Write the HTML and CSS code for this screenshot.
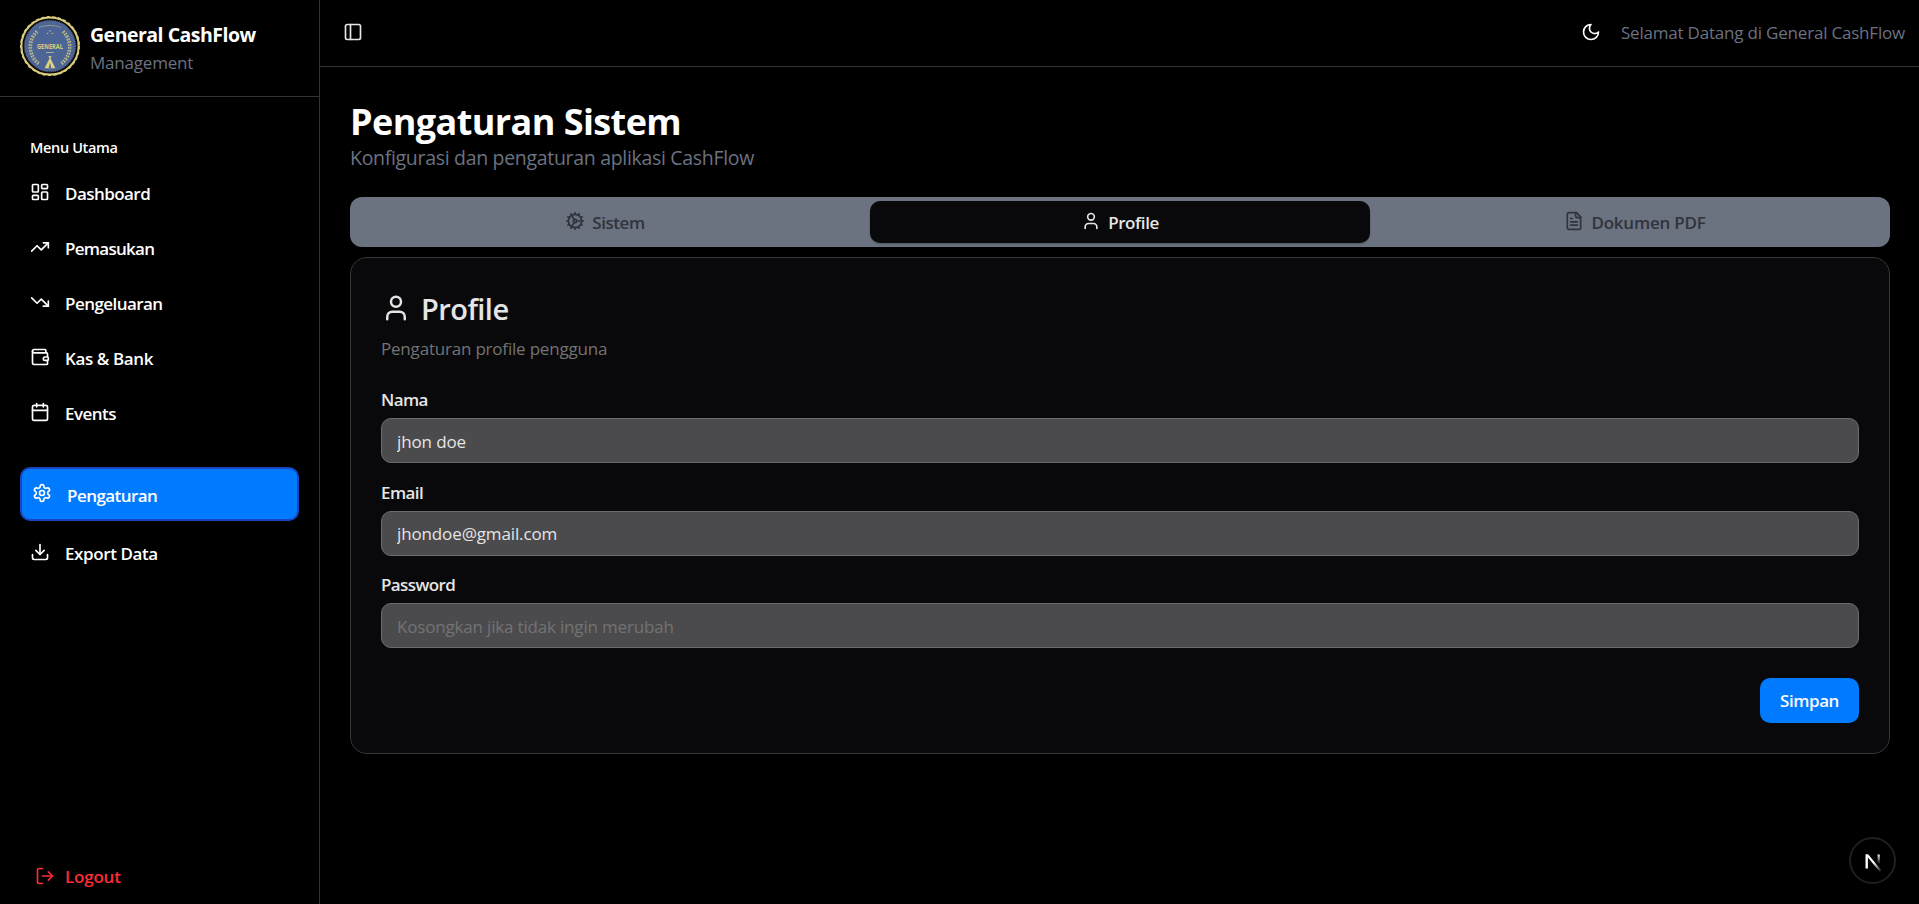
FILE: index.html
```html
<!DOCTYPE html>
<html lang="id">
<head>
<meta charset="utf-8">
<title>General CashFlow</title>
<link rel="stylesheet" href="styles.css">
</head>
<body>
<aside class="sidebar">
  <div class="brand">
    <svg class="brand-logo" viewBox="0 0 60 60">
      <circle cx="30" cy="30" r="28.6" fill="#07070a" stroke="#d8cd7c" stroke-width="2"/>
      <circle cx="30" cy="30" r="29.3" fill="none" stroke="#d8cd7c" stroke-width="1.3" stroke-dasharray="3.4 2.2"/>
      <circle cx="30" cy="30" r="25.6" fill="#4d6496"/>
      <circle cx="30" cy="30" r="25.8" fill="none" stroke="#8b9098" stroke-width=".6" stroke-dasharray="1 1"/>
      <path d="M17 15.5A21 21 0 0 0 18.5 47.5M43 15.5A21 21 0 0 1 41.5 47.5" fill="none" stroke="#c5c184" stroke-width="3.6" stroke-dasharray="1.6 1.3"/>
      <path d="M17 15.5A21 21 0 0 0 18.5 47.5M43 15.5A21 21 0 0 1 41.5 47.5" fill="none" stroke="#7f8c8e" stroke-width="1"/>
      <path d="M19 11.5Q30 7.5 41 11.5" fill="none" stroke="#a9ad8e" stroke-width="1" stroke-dasharray="1.6 .5"/>
      <path d="M29 15.5l1-1.5 1 1.5zM26.500 18l1-1.6 1 1.6zM31.500 18l1-1.6 1 1.6z" fill="#c5c184"/>
      <text class="logo-text" x="30" y="32.8" text-anchor="middle" textLength="26" lengthAdjust="spacingAndGlyphs">GENERAL</text>
      <path d="M26 36.500h8" stroke="#a9ad8e" stroke-width="1"/>
      <path d="M28.700 40l1.300 2.500 1.300-2.500M30 42l5 10h-10z" fill="#e0d47c" stroke="#e0d47c" stroke-width=".5"/>
      <path d="M30 46.500l1.300 5.500h-2.600z" fill="#4d6496"/>
    </svg>
    <div class="brand-text">
      <div class="brand-name">General CashFlow</div>
      <div class="brand-sub">Management</div>
    </div>
  </div>
  <nav class="nav">
    <div class="nav-label">Menu Utama</div>
    <a class="nav-item"><svg class="icon" viewBox="0 0 24 24"><rect width="7" height="9" x="3" y="3" rx="1"/><rect width="7" height="5" x="14" y="3" rx="1"/><rect width="7" height="9" x="14" y="12" rx="1"/><rect width="7" height="5" x="3" y="16" rx="1"/></svg><span>Dashboard</span></a>
    <a class="nav-item"><svg class="icon" viewBox="0 0 24 24"><path d="M16 7h6v6"/><path d="m22 7-8.500 8.500-5-5L2 17"/></svg><span class="tight">Pemasukan</span></a>
    <a class="nav-item"><svg class="icon" viewBox="0 0 24 24"><path d="M16 17h6v-6"/><path d="m22 17-8.500-8.500-5 5L2 7"/></svg><span>Pengeluaran</span></a>
    <a class="nav-item"><svg class="icon" viewBox="0 0 24 24"><path d="M19 7V4a1 1 0 0 0-1-1H5a2 2 0 0 0 0 4h15a1 1 0 0 1 1 1v4h-3a2 2 0 0 0 0 4h3a1 1 0 0 0 1-1v-2a1 1 0 0 0-1-1"/><path d="M3 5v14a2 2 0 0 0 2 2h15a1 1 0 0 0 1-1v-4"/></svg><span class="loose">Kas &amp; Bank</span></a>
    <a class="nav-item"><svg class="icon" viewBox="0 0 24 24"><path d="M8 2v4M16 2v4"/><rect width="18" height="18" x="3" y="4" rx="2"/><path d="M3 10h18"/></svg><span>Events</span></a>
    <a class="nav-item nav-active"><svg class="icon" viewBox="0 0 24 24"><path d="M12.220 2h-.44a2 2 0 0 0-2 2v.18a2 2 0 0 1-1 1.730l-.43.25a2 2 0 0 1-2 0l-.15-.08a2 2 0 0 0-2.730.73l-.22.38a2 2 0 0 0 .73 2.730l.15.1a2 2 0 0 1 1 1.720v.51a2 2 0 0 1-1 1.740l-.15.09a2 2 0 0 0-.73 2.730l.22.38a2 2 0 0 0 2.730.73l.15-.08a2 2 0 0 1 2 0l.43.25a2 2 0 0 1 1 1.730V20a2 2 0 0 0 2 2h.44a2 2 0 0 0 2-2v-.18a2 2 0 0 1 1-1.730l.43-.25a2 2 0 0 1 2 0l.15.08a2 2 0 0 0 2.730-.73l.22-.39a2 2 0 0 0-.73-2.730l-.15-.08a2 2 0 0 1-1-1.740v-.5a2 2 0 0 1 1-1.740l.15-.09a2 2 0 0 0 .73-2.730l-.22-.38a2 2 0 0 0-2.730-.73l-.15.08a2 2 0 0 1-2 0l-.43-.25a2 2 0 0 1-1-1.730V4a2 2 0 0 0-2-2z"/><circle cx="12" cy="12" r="3"/></svg><span>Pengaturan</span></a>
    <a class="nav-item"><svg class="icon" viewBox="0 0 24 24"><path d="M12 15V3"/><path d="M21 15v4a2 2 0 0 1-2 2H5a2 2 0 0 1-2-2v-4"/><path d="m7 10 5 5 5-5"/></svg><span class="loose">Export Data</span></a>
  </nav>
  <a class="nav-item logout"><svg class="icon" viewBox="0 0 24 24"><path d="m16 17 5-5-5-5"/><path d="M21 12H9"/><path d="M9 21H5a2 2 0 0 1-2-2V5a2 2 0 0 1 2-2h4"/></svg><span>Logout</span></a>
</aside>
<div class="main">
  <header class="topbar">
    <svg class="icon" viewBox="0 0 24 24"><rect width="18" height="18" x="3" y="3" rx="2"/><path d="M9 3v18"/></svg>
    <div class="topbar-right">
      <svg class="icon moon" viewBox="0 0 24 24"><path d="M12 3a6 6 0 0 0 9 9 9 9 0 1 1-9-9Z"/></svg>
      <span class="welcome">Selamat Datang di General CashFlow</span>
    </div>
  </header>
  <main class="content">
    <h1 class="title">Pengaturan Sistem</h1>
    <p class="subtitle">Konfigurasi dan pengaturan aplikasi CashFlow</p>
    <div class="tabs">
      <div class="tab"><svg class="icon" viewBox="0 0 24 24"><path d="M12 20a8 8 0 1 0 0-16 8 8 0 0 0 0 16Z"/><path d="M12 14a2 2 0 1 0 0-4 2 2 0 0 0 0 4Z"/><path d="M12 2v2M12 22v-2M17 20.660l-1-1.730M11 10.270 7 3.340M20.660 17l-1.730-1M3.340 7l1.730 1M14 12h8M2 12h2M20.660 7l-1.730 1M3.340 17l1.730-1M17 3.340l-1 1.730M11 13.730l-4 6.930"/></svg><span>Sistem</span></div>
      <div class="tab tab-active"><svg class="icon" viewBox="0 0 24 24"><path d="M19 21v-2a4 4 0 0 0-4-4H9a4 4 0 0 0-4 4v2"/><circle cx="12" cy="7" r="4"/></svg><span>Profile</span></div>
      <div class="tab"><svg class="icon" viewBox="0 0 24 24"><path d="M15 2H6a2 2 0 0 0-2 2v16a2 2 0 0 0 2 2h12a2 2 0 0 0 2-2V7Z"/><path d="M14 2v4a2 2 0 0 0 2 2h4"/><path d="M10 9H8M16 13H8M16 17H8"/></svg><span class="pdf">Dokumen PDF</span></div>
    </div>
    <section class="card">
      <div class="card-title"><svg class="icon icon-lg" viewBox="0 0 24 24"><path d="M19 21v-2a4 4 0 0 0-4-4H9a4 4 0 0 0-4 4v2"/><circle cx="12" cy="7" r="4"/></svg><h2>Profile</h2></div>
      <p class="card-sub">Pengaturan profile pengguna</p>
      <form class="form">
        <label class="field"><span class="label">Nama</span><input class="input" type="text" value="jhon doe"></label>
        <label class="field"><span class="label">Email</span><input class="input" type="text" value="jhondoe@gmail.com"></label>
        <label class="field"><span class="label">Password</span><input class="input" type="password" placeholder="Kosongkan jika tidak ingin merubah"></label>
        <button class="save" type="button">Simpan</button>
      </form>
    </section>
  </main>
</div>
<div class="dev-badge">
  <svg viewBox="0 0 46 46">
    <defs>
      <linearGradient id="fade-diag" gradientUnits="userSpaceOnUse" x1="24" y1="24" x2="31" y2="33"><stop offset="0" stop-color="#fff"/><stop offset="1" stop-color="#fff" stop-opacity="0.1"/></linearGradient>
      <linearGradient id="fade-stem" gradientUnits="userSpaceOnUse" x1="0" y1="16" x2="0" y2="26"><stop offset="0" stop-color="#fff"/><stop offset="1" stop-color="#fff" stop-opacity="0"/></linearGradient>
    </defs>
    <rect x="15.500" y="16.500" width="2.400" height="14" fill="#fff"/>
    <path d="M15.500 16.500h2.800L31.500 32.500l-1.900 1.300z" fill="url(#fade-diag)"/>
    <rect x="27.600" y="16.500" width="2.200" height="10" fill="url(#fade-stem)"/>
  </svg>
</div>
</body>
</html>
```
FILE: styles.css
```css
* { box-sizing: border-box; margin: 0; padding: 0; }
body {
  display: flex;
  height: 904px;
  overflow: hidden;
  background: #000;
  color: #fff;
  font: 400 17px/24px "Open Sans", sans-serif;
  letter-spacing: -.2px;
}
.icon {
  flex: none;
  width: 20px;
  height: 20px;
  fill: none;
  stroke: currentColor;
  stroke-width: 2;
  stroke-linecap: round;
  stroke-linejoin: round;
}

/* Sidebar */
.sidebar {
  display: flex;
  flex-direction: column;
  flex: none;
  width: 320px;
  border-right: 1px solid #333335;
}
.brand {
  display: flex;
  gap: 10px;
  height: 97px;
  padding: 16px 20px 0;
  border-bottom: 1px solid #333335;
}
.brand-logo { width: 60px; height: 60px; }
.logo-text { font: 700 6.5px "Open Sans", sans-serif; fill: #d8cd7c; letter-spacing: 0; }
.brand-text { padding-top: 5px; }
.brand-name { font-size: 19.5px; font-weight: 700; line-height: 28px; letter-spacing: -.5px; }
.brand-sub { color: #6b7280; line-height: 28px; }
.nav { display: flex; flex-direction: column; gap: 10px; padding: 36px 20px 0; }
.nav-label {
  height: 28px;
  padding-left: 10px;
  font-size: 14.5px;
  font-weight: 650;
  line-height: 30px;
  letter-spacing: -.35px;
}
.nav-item {
  display: flex;
  align-items: center;
  gap: 15px;
  height: 45px;
  padding-left: 10px;
  font-weight: 650;
  letter-spacing: -.55px;
}
.nav-label + .nav-item { margin-top: -1px; }
.nav-item .icon { margin-top: -2px; }
.nav-item span { padding-top: 2px; }
.nav-item .tight { letter-spacing: -.73px; }
.nav-item .loose { letter-spacing: -.4px; }
.nav-active {
  height: 54px;
  margin: 22px 0 -1px;
  border: 2px solid #1a45c0;
  border-radius: 10px;
  background: #007bff;
}
.nav-active span { padding-top: 3px; }
.logout {
  margin-top: auto;
  margin-bottom: 5px;
  padding-left: 35px;
  gap: 10px;
  color: #fb2c36;
  letter-spacing: -.2px;
}
.logout span { padding-top: 0; }

/* Top bar */
.main { flex: 1; min-width: 0; }
.topbar {
  display: flex;
  align-items: center;
  justify-content: space-between;
  height: 67px;
  padding: 0 14px 2px 23px;
  border-bottom: 1px solid #333335;
}
.topbar > .icon { color: #e5e5e5; }
.topbar-right { display: flex; align-items: center; gap: 20px; }
.welcome { padding-top: 2px; color: #6b7280; letter-spacing: -.2px; }

/* Page */
.content { padding: 34px 29px 0 30px; }
.title { font-size: 36px; font-weight: 700; line-height: 42px; letter-spacing: -.58px; }
.subtitle { color: #6b7280; font-size: 19.5px; line-height: 30px; letter-spacing: -.31px; }
.tabs {
  display: grid;
  grid-template-columns: repeat(3, 500px);
  justify-content: center;
  gap: 15px;
  height: 50px;
  margin: 24px 0 10px;
  padding: 4px 0;
  border-radius: 12px;
  background: #6b7280;
}
.tab {
  display: flex;
  align-items: center;
  justify-content: center;
  gap: 7px;
  color: #30343c;
  font-weight: 600;
  letter-spacing: -.42px;
  border-radius: 10px;
}
.tab .icon { margin-top: -2px; }
.tab span { padding-top: 2px; }
.tab .pdf { letter-spacing: -.22px; }
.tab-active { color: #e5e5e5; background: #09090b; box-shadow: 0 1px 2px rgb(0 0 0 / 25%); }
.card {
  height: 497px;
  padding: 29px 30px 0;
  border: 1px solid #363638;
  border-radius: 17px;
  background: #09090b;
  color: #e5e5e5;
}
.card-title { display: flex; align-items: center; gap: 10px; height: 44px; }
.icon-lg { width: 30px; height: 30px; margin-top: -2px; }
.card-title h2 { font-size: 29px; font-weight: 600; letter-spacing: -.55px; }
.card-sub { color: #737373; line-height: 36px; }
.form { display: flex; flex-direction: column; gap: 16.5px; padding-top: 20px; }
.field { display: flex; flex-direction: column; gap: 7px; }
.label { height: 24px; font-weight: 650; line-height: 26px; letter-spacing: -.6px; }
.input {
  height: 45px;
  padding: 1px 15px 0;
  border: 1px solid #6c6c6e;
  border-radius: 10px;
  outline: 0;
  background: #4b4b4d;
  color: #e5e5e5;
  font: inherit;
  letter-spacing: -.13px;
}
.input::placeholder { color: #737373; opacity: 1; letter-spacing: -.18px; }
.save {
  align-self: flex-end;
  width: 99px;
  height: 45px;
  margin-top: 13px;
  padding-top: 1px;
  border: 0;
  border-radius: 10px;
  background: #007bff;
  color: #f8fafc;
  font: 650 17px/24px "Open Sans", sans-serif;
  letter-spacing: -.45px;
}

/* Floating framework badge */
.dev-badge {
  position: absolute;
  right: 23px;
  bottom: 20px;
  width: 47px;
  height: 47px;
  border: 2px solid #1f1f1f;
  border-radius: 50%;
}
.dev-badge svg { display: block; width: 46px; height: 46px; margin: -1px; }
```
